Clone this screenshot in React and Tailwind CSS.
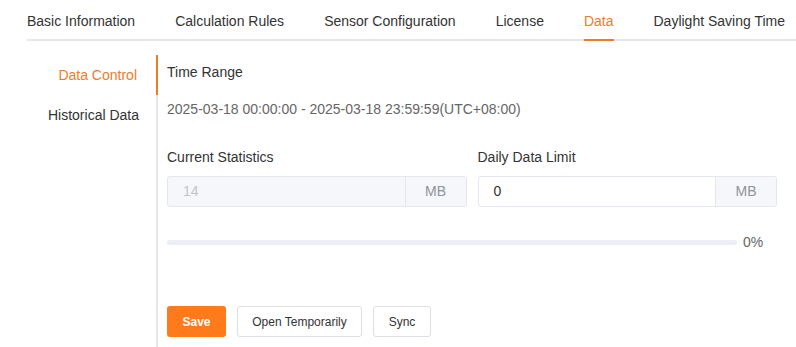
export default function App() {
  const tabs = ['Basic Information', 'Calculation Rules', 'Sensor Configuration', 'License', 'Data', 'Daylight Saving Time']
  const menu = ['Data Control', 'Historical Data']

  return (
    <div className="h-[347px] w-[796px] overflow-hidden bg-white text-[14px] text-[#333] font-['Liberation_Sans',Arial,sans-serif]">
      <div className="ml-[27px] flex h-[41px] gap-[40px] border-b-2 border-[#e4e7ed]">
        {tabs.map((t) => (
          <div
            key={t}
            className={`-mb-[2px] flex h-[41px] items-center whitespace-nowrap border-b-2 pt-[3px] ${
              t === 'Data' ? 'border-[#f07c2a] text-[#f07c2a]' : 'border-transparent'
            }`}
          >
            {t}
          </div>
        ))}
      </div>

      <div className="mt-[14px] flex">
        <div className="h-[300px] w-[158px] shrink-0 border-r-2 border-[#e4e7ed]">
          {menu.map((m, i) => (
            <div
              key={m}
              className={`-mr-[2px] flex h-[40px] items-center justify-end pr-[19px] ${
                i === 0 ? 'border-r-2 border-[#f07c2a] text-[#f07c2a]' : ''
              }`}
            >
              {m}
            </div>
          ))}
        </div>

        <div className="flex-1 pl-[9px] pr-[19px]">
          <div className="mt-[7px] leading-[20px]">Time Range</div>
          <div className="mt-[17px] leading-[20px] text-[#666]">
            2025-03-18 00:00:00 - 2025-03-18 23:59:59(UTC+08:00)
          </div>

          <div className="mt-[28px] grid grid-cols-2 gap-[11px]">
            <div>
              <div className="leading-[20px]">Current Statistics</div>
              <div className="mt-[9px] flex h-[31px] overflow-hidden rounded-[3px] border border-[#e4e7ed] bg-[#f5f7fa]">
                <div className="flex flex-1 items-center px-[15px] text-[#c0c4cc]">14</div>
                <div className="flex w-[61px] items-center justify-center border-l border-[#e4e7ed] text-[#909399]">MB</div>
              </div>
            </div>
            <div>
              <div className="leading-[20px]">Daily Data Limit</div>
              <div className="mt-[9px] flex h-[31px] overflow-hidden rounded-[3px] border border-[#e4e7ed] bg-white">
                <div className="flex flex-1 items-center px-[15px] text-[#333]">0</div>
                <div className="flex w-[61px] items-center justify-center border-l border-[#e4e7ed] bg-[#f5f7fa] text-[#909399]">MB</div>
              </div>
            </div>
          </div>

          <div className="mt-[25px] flex h-[20px] items-center gap-[6px]">
            <div className="h-[5px] w-[570px] rounded-full bg-[#ebeef5]" />
            <span className="text-[#666]">0%</span>
          </div>

          <div className="mt-[54px] flex gap-[11px] text-[12px]">
            <button className="h-[31px] w-[59px] rounded-[3px] bg-[#ff7a1a] font-bold text-white">Save</button>
            <button className="h-[31px] w-[125px] rounded-[3px] border border-[#dcdfe6] bg-white text-[#333]">Open Temporarily</button>
            <button className="h-[31px] w-[58px] rounded-[3px] border border-[#dcdfe6] bg-white text-[#333]">Sync</button>
          </div>
        </div>
      </div>
    </div>
  )
}
